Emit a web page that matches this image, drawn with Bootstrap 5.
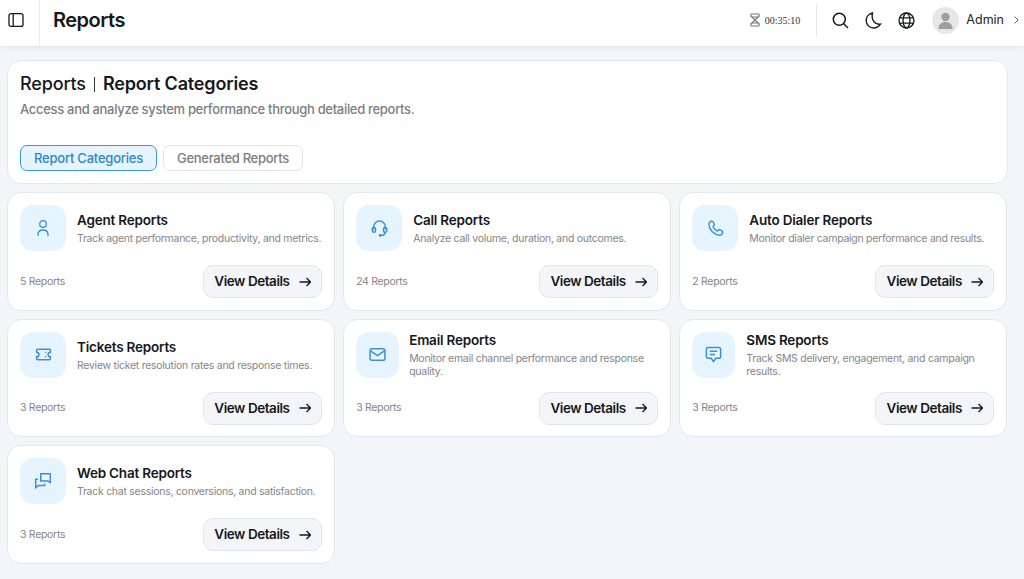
<!DOCTYPE html>
<html lang="en">
<head>
<meta charset="utf-8">
<title>Reports</title>
<link href="https://cdn.jsdelivr.net/npm/bootstrap@5.3.0/dist/css/bootstrap.min.css" rel="stylesheet">
<script src="https://cdn.jsdelivr.net/npm/bootstrap@5.3.0/dist/js/bootstrap.bundle.min.js"></script>
<style>
body{background:#f3f5f9;font-family:Inter,"Noto Sans",sans-serif;color:#16181d;height:579px;overflow:hidden}
.topbar{height:46px;background:#fff;box-shadow:0 1px 5px rgba(30,50,80,.1);padding:0}
.toggle-cell{width:40px;height:46px;border-right:1px solid #e3edf5;padding-bottom:6px;padding-right:7px}
.page-name{font-size:20px;font-weight:600;margin-left:13px;letter-spacing:-.5px;padding-bottom:6px}
.right-tools{padding:0 5px 6px 0}
.timer{font-family:"Liberation Serif",serif;font-size:10px;color:#333;margin-right:16px}
.vrule{width:1px;height:33px;background:#dfeaf2;margin-right:15px}
.top-ico{color:#16181d;display:block}
.globe-ico{margin-right:17px}
.hour-ico{margin-right:5px}
.avatar{width:27px;height:27px;background:#e6e6e6;border-radius:50%;overflow:hidden}
.admin{font-size:12.5px;color:#222;margin-left:7px}
.chev-ico{margin-left:10px}
.main-area{padding:13.5px 16.5px 0 7px}
.head-panel{background:#fff;border:1px solid #dfe9f2;border-radius:14px;padding:11.5px 12px;height:124.5px;margin-bottom:8px}
.head-title{font-size:18px;line-height:24px;margin:0;font-weight:500;letter-spacing:-.15px}
.head-title b{font-weight:600}
.head-sep{display:inline-block;width:1px;height:15px;background:#333;margin:0 8px;vertical-align:-2px}
.head-sub{font-size:13px;color:#7d7d7d;font-weight:500;line-height:16px;margin:5px 0 0;letter-spacing:-.31px}
.tab-row{margin-top:28px;gap:6px}
.tab-pill{height:26px;border-radius:7px;font-size:13px;font-weight:500;padding:0 13px;border:1px solid #dfe3e8;background:#fff;color:#7d7d7d;line-height:24px;letter-spacing:-.3px}
.tab-pill.on{background:#e6f4ff;border-color:#3b98dc;color:#2e86c9;letter-spacing:-.22px}
.tile{background:#fff;border:1px solid #dfe9f2;border-radius:14px;padding:12px;height:118.5px}
.tile-ico{flex:0 0 46px;width:46px;height:46px;border-radius:13px;background:#e6f4ff;color:#3a8fd6}
.tile-ico.slim{flex-basis:43px;width:43px}
.tile-name{font-size:13.5px;font-weight:600;line-height:18px;margin:0 0 3px;letter-spacing:-.2px}
.tile-desc{font-size:10.5px;line-height:13px;color:#85858a;margin:0;letter-spacing:-.27px}
.tile-count{font-size:10.5px;color:#85858a;letter-spacing:-.3px}
.go-btn{height:33px;width:119.5px;background:#f3f5f9;border:1px solid #dfe7f0;border-radius:10px;font-size:13.5px;font-weight:600;color:#16181d;padding:0;letter-spacing:-.45px;gap:9px}
.go-btn:hover{background:#f3f5f9;color:#16181d;border-color:#dfe7f0}
.tile-row{margin-bottom:14px;height:46px;gap:11px}
.tile-row.tight{gap:10px}
</style>
</head>
<body>
<nav class="navbar topbar flex-nowrap justify-content-between align-items-center">
  <div class="d-flex align-items-center">
    <div class="toggle-cell d-flex align-items-center justify-content-center">
      <svg class="top-ico" width="16" height="16" viewBox="0 0 16 16" fill="none" stroke="currentColor" stroke-width="1.3"><rect x="1" y="1.6" width="14" height="12.8" rx="2"/><path d="M5.2 1.6v12.8"/></svg>
    </div>
    <div class="page-name">Reports</div>
  </div>
  <div class="right-tools d-flex align-items-center">
    <svg class="hour-ico" width="10" height="14" viewBox="0 0 10 14" fill="none" stroke="#777" stroke-width="1.2"><rect x="1" y="1" width="8" height="3" rx=".5"/><rect x="1" y="10" width="8" height="3" rx=".5"/><path d="M2 4l3 3-3 3M8 4L5 7l3 3"/></svg>
    <span class="timer">00:35:10</span>
    <span class="vrule"></span>
    <svg class="top-ico me-3" width="17" height="17" viewBox="0 0 17 17" fill="none" stroke="currentColor" stroke-width="1.5"><circle cx="7.3" cy="7.3" r="6"/><path d="M11.700 11.700l4.300 4.300"/></svg>
    <svg class="top-ico me-3" width="17" height="17" viewBox="0 0 17 17" fill="none" stroke="currentColor" stroke-width="1.4"><path d="M7.500 1C3.800 1.700 1.200 4.800 1.200 8.600c0 4.200 3.400 7.400 7.400 7.400 2.600 0 5.400-1.500 6.800-3.800-4.800.8-9.600-3.600-7.900-11.200z"/></svg>
    <svg class="top-ico globe-ico" width="17" height="17" viewBox="0 0 17 17" fill="none" stroke="currentColor" stroke-width="1.3"><circle cx="8.500" cy="8.500" r="7.500"/><ellipse cx="8.500" cy="8.500" rx="3.400" ry="7.500"/><path d="M1.600 5.800h13.800M1.600 11.200h13.800"/></svg>
    <span class="avatar d-flex justify-content-center"><svg width="27" height="27" viewBox="0 0 27 27" fill="#9e9e9e"><circle cx="13.500" cy="10" r="4.200"/><path d="M6.500 22c0-5 3-7 7-7s7 2 7 7z"/></svg></span>
    <span class="admin">Admin</span>
    <svg class="chev-ico" width="5" height="8" viewBox="0 0 5 8" fill="none" stroke="#555" stroke-width="1"><path d="M.7.7L4.200 4 .7 7.300"/></svg>
  </div>
</nav>
<main class="main-area">
  <section class="head-panel">
    <h1 class="head-title">Reports<span class="head-sep"></span><b>Report Categories</b></h1>
    <p class="head-sub">Access and analyze system performance through detailed reports.</p>
    <div class="d-flex tab-row">
      <button class="btn tab-pill on" type="button">Report Categories</button>
      <button class="btn tab-pill" type="button">Generated Reports</button>
    </div>
  </section>
  <div class="row row-cols-3 g-2">
    <div class="col"><div class="tile">
      <div class="d-flex align-items-center tile-row">
        <div class="tile-ico d-flex align-items-center justify-content-center"><svg width="12" height="16" viewBox="0 0 12 16" fill="none" stroke="currentColor" stroke-width="1.300"><circle cx="6" cy="4" r="3.300"/><path d="M1 16v-1.500C1 11.500 3 10 6 10s5 1.500 5 4.500V16"/></svg></div>
        <div><h2 class="tile-name">Agent Reports</h2><p class="tile-desc">Track agent performance, productivity, and metrics.</p></div>
      </div>
      <div class="d-flex justify-content-between align-items-center"><span class="tile-count">5 Reports</span><button class="btn go-btn d-flex align-items-center justify-content-center" type="button">View Details <svg width="12" height="10" viewBox="0 0 12 10" fill="none" stroke="currentColor" stroke-width="1.300"><path d="M.5 5h11M7.500 1l4 4-4 4"/></svg></button></div>
    </div></div>
    <div class="col"><div class="tile">
      <div class="d-flex align-items-center tile-row">
        <div class="tile-ico d-flex align-items-center justify-content-center"><svg width="17" height="17" viewBox="0 0 16 16" fill="none" stroke="currentColor" stroke-width="1.400"><path d="M2.500 9V6.500a5.500 5.500 0 0 1 11 0V9"/><rect x="1.200" y="7" width="3" height="4.500" rx="1.400"/><rect x="11.800" y="7" width="3" height="4.500" rx="1.400"/><path d="M13.300 11.500c0 2-1.500 3-4 3"/><circle cx="8.500" cy="14.500" r=".6"/></svg></div>
        <div><h2 class="tile-name">Call Reports</h2><p class="tile-desc">Analyze call volume, duration, and outcomes.</p></div>
      </div>
      <div class="d-flex justify-content-between align-items-center"><span class="tile-count">24 Reports</span><button class="btn go-btn d-flex align-items-center justify-content-center" type="button">View Details <svg width="12" height="10" viewBox="0 0 12 10" fill="none" stroke="currentColor" stroke-width="1.300"><path d="M.5 5h11M7.500 1l4 4-4 4"/></svg></button></div>
    </div></div>
    <div class="col"><div class="tile">
      <div class="d-flex align-items-center tile-row">
        <div class="tile-ico d-flex align-items-center justify-content-center"><svg width="17" height="17" viewBox="0 0 16 16" fill="none" stroke="currentColor" stroke-width="1.300"><path d="M4.300 1.200L5.700 1.600 7 4.600 5.600 6.200c.7 1.800 2.300 3.500 4.200 4.200l1.600-1.400 3 1.300.4 1.500c.2 1-1.300 2.700-2.800 2.500C6.500 13.800 2.200 9.500 1.700 4 1.500 2.600 3.300 1 4.300 1.200z"/></svg></div>
        <div><h2 class="tile-name">Auto Dialer Reports</h2><p class="tile-desc">Monitor dialer campaign performance and results.</p></div>
      </div>
      <div class="d-flex justify-content-between align-items-center"><span class="tile-count">2 Reports</span><button class="btn go-btn d-flex align-items-center justify-content-center" type="button">View Details <svg width="12" height="10" viewBox="0 0 12 10" fill="none" stroke="currentColor" stroke-width="1.300"><path d="M.5 5h11M7.500 1l4 4-4 4"/></svg></button></div>
    </div></div>
    <div class="col"><div class="tile">
      <div class="d-flex align-items-center tile-row">
        <div class="tile-ico d-flex align-items-center justify-content-center"><svg width="17" height="17" viewBox="0 0 16 16" fill="none" stroke="currentColor" stroke-width="1.400"><path d="M2.500 3h11c.6 0 1 .4 1 1v1.800a2.200 2.200 0 0 0 0 4.400V12c0 .6-.4 1-1 1h-11c-.6 0-1-.4-1-1v-1.800a2.200 2.200 0 0 0 0-4.400V4c0-.6.4-1 1-1z"/><path d="M10 5.500v1M10 9.500v1"/></svg></div>
        <div><h2 class="tile-name">Tickets Reports</h2><p class="tile-desc">Review ticket resolution rates and response times.</p></div>
      </div>
      <div class="d-flex justify-content-between align-items-center"><span class="tile-count">3 Reports</span><button class="btn go-btn d-flex align-items-center justify-content-center" type="button">View Details <svg width="12" height="10" viewBox="0 0 12 10" fill="none" stroke="currentColor" stroke-width="1.300"><path d="M.5 5h11M7.500 1l4 4-4 4"/></svg></button></div>
    </div></div>
    <div class="col"><div class="tile">
      <div class="d-flex align-items-center tile-row tight">
        <div class="tile-ico slim d-flex align-items-center justify-content-center"><svg width="17" height="17" viewBox="0 0 16 16" fill="none" stroke="currentColor" stroke-width="1.400"><rect x="1" y="2.500" width="14" height="11" rx="1.800"/><path d="M1.500 4.500L8 9l6.500-4.500"/></svg></div>
        <div><h2 class="tile-name">Email Reports</h2><p class="tile-desc">Monitor email channel performance and response quality.</p></div>
      </div>
      <div class="d-flex justify-content-between align-items-center"><span class="tile-count">3 Reports</span><button class="btn go-btn d-flex align-items-center justify-content-center" type="button">View Details <svg width="12" height="10" viewBox="0 0 12 10" fill="none" stroke="currentColor" stroke-width="1.300"><path d="M.5 5h11M7.500 1l4 4-4 4"/></svg></button></div>
    </div></div>
    <div class="col"><div class="tile">
      <div class="d-flex align-items-center tile-row">
        <div class="tile-ico slim d-flex align-items-center justify-content-center"><svg width="17" height="17" viewBox="0 0 16 16" fill="none" stroke="currentColor" stroke-width="1.400"><path d="M3 1.500h10c1 0 1.700.7 1.700 1.700v6.600c0 1-.7 1.700-1.700 1.700h-2.800L8 14.500l-2.200-3H3c-1 0-1.700-.7-1.700-1.700V3.200c0-1 .7-1.700 1.700-1.700z"/><path d="M4.500 5h7M4.500 8h5"/></svg></div>
        <div><h2 class="tile-name">SMS Reports</h2><p class="tile-desc">Track SMS delivery, engagement, and campaign results.</p></div>
      </div>
      <div class="d-flex justify-content-between align-items-center"><span class="tile-count">3 Reports</span><button class="btn go-btn d-flex align-items-center justify-content-center" type="button">View Details <svg width="12" height="10" viewBox="0 0 12 10" fill="none" stroke="currentColor" stroke-width="1.300"><path d="M.5 5h11M7.500 1l4 4-4 4"/></svg></button></div>
    </div></div>
    <div class="col"><div class="tile">
      <div class="d-flex align-items-center tile-row">
        <div class="tile-ico d-flex align-items-center justify-content-center"><svg width="18" height="18" viewBox="0 0 16 16" fill="none" stroke="currentColor" stroke-width="1.300"><path d="M6 1.500h8.500v8l-2-1.500H6z" stroke-linejoin="round"/><path d="M3.500 6.500h-2V14l2.500-2h5.500V10.500"/></svg></div>
        <div><h2 class="tile-name">Web Chat Reports</h2><p class="tile-desc">Track chat sessions, conversions, and satisfaction.</p></div>
      </div>
      <div class="d-flex justify-content-between align-items-center"><span class="tile-count">3 Reports</span><button class="btn go-btn d-flex align-items-center justify-content-center" type="button">View Details <svg width="12" height="10" viewBox="0 0 12 10" fill="none" stroke="currentColor" stroke-width="1.300"><path d="M.5 5h11M7.500 1l4 4-4 4"/></svg></button></div>
    </div></div>
  </div>
</main>
</body>
</html>
